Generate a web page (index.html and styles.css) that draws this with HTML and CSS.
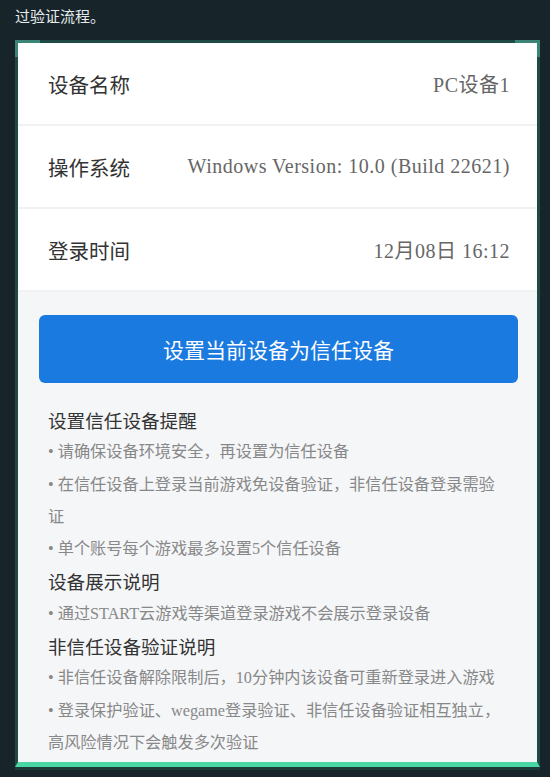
FILE: index.html
```html
<!DOCTYPE html>
<html lang="zh">
<head>
<meta charset="utf-8">
<link rel="stylesheet" href="styles.css">
</head>
<body>
<div class="intro">过验证流程。</div>
<div class="card">
  <div class="rows">
    <div class="row"><span class="label">设备名称</span><span class="value">PC设备1</span></div>
    <div class="row"><span class="label">操作系统</span><span class="value">Windows Version: 10.0 (Build 22621)</span></div>
    <div class="row"><span class="label">登录时间</span><span class="value">12月08日 16:12</span></div>
  </div>
  <div class="panel">
    <button class="trust-btn">设置当前设备为信任设备</button>
    <div class="notes">
      <div class="heading">设置信任设备提醒</div>
      <div class="item">• 请确保设备环境安全，再设置为信任设备</div>
      <div class="item">• 在信任设备上登录当前游戏免设备验证，非信任设备登录需验证</div>
      <div class="item">• 单个账号每个游戏最多设置5个信任设备</div>
      <div class="heading">设备展示说明</div>
      <div class="item">• 通过START云游戏等渠道登录游戏不会展示登录设备</div>
      <div class="heading">非信任设备验证说明</div>
      <div class="item">• 非信任设备解除限制后，10分钟内该设备可重新登录进入游戏</div>
      <div class="item">• 登录保护验证、wegame登录验证、非信任设备验证相互独立，高风险情况下会触发多次验证</div>
    </div>
  </div>
</div>
</body>
</html>
```
FILE: styles.css
```css
html, body {
  margin: 0;
  padding: 0;
}
body {
  width: 550px;
  height: 777px;
  overflow: hidden;
  background: #17252a;
  font-family: "Liberation Serif", "Noto Sans CJK SC", serif;
}
.intro {
  padding: 5px 0 0 15px;
  height: 40px;
  box-sizing: border-box;
  font-family: "Noto Sans CJK SC", sans-serif;
  font-size: 15px;
  line-height: 22px;
  color: #e6ecee;
}
.card {
  position: relative;
  margin-left: 15px;
  width: 525px;
  box-sizing: border-box;
  border: 3px solid #1f4943;
  border-bottom: 5px solid #4ad7a6;
  box-shadow: 0 3px 0 #1c3b37;
  background: #f5f6f8;
}
.card::before,
.card::after {
  content: "";
  position: absolute;
  top: -3px;
  width: 22px;
  height: 14px;
  border-top: 3px solid #3a8576;
}
.card::before {
  left: -3px;
  border-left: 3px solid #3a8576;
}
.card::after {
  right: -3px;
  border-right: 3px solid #3a8576;
}
.rows {
  background: #ffffff;
}
.row {
  display: flex;
  align-items: center;
  justify-content: space-between;
  height: 81px;
  padding: 0 27px 0 30px;
  border-bottom: 2px solid #eff1f3;
}
.label {
  font-family: "Noto Sans CJK SC", sans-serif;
  font-size: 20.5px;
  color: #333333;
}
.value {
  font-size: 20px;
  letter-spacing: 0.5px;
  color: #666666;
}
.panel {
  padding: 23px 19px 3px 21px;
}
.trust-btn {
  display: block;
  width: 100%;
  height: 68px;
  border: none;
  border-radius: 6px;
  background: #1a7ae0;
  color: #ffffff;
  font-family: "Noto Sans CJK SC", sans-serif;
  font-size: 21px;
  padding: 0;
}
.notes {
  margin-top: 21px;
  padding: 0 16px 0 9px;
  line-height: 32.3px;
}
.heading {
  font-family: "Noto Sans CJK SC", sans-serif;
  font-size: 18.6px;
  font-weight: 400;
  color: #333333;
}
.item {
  font-size: 16.2px;
  color: #888888;
}
```
